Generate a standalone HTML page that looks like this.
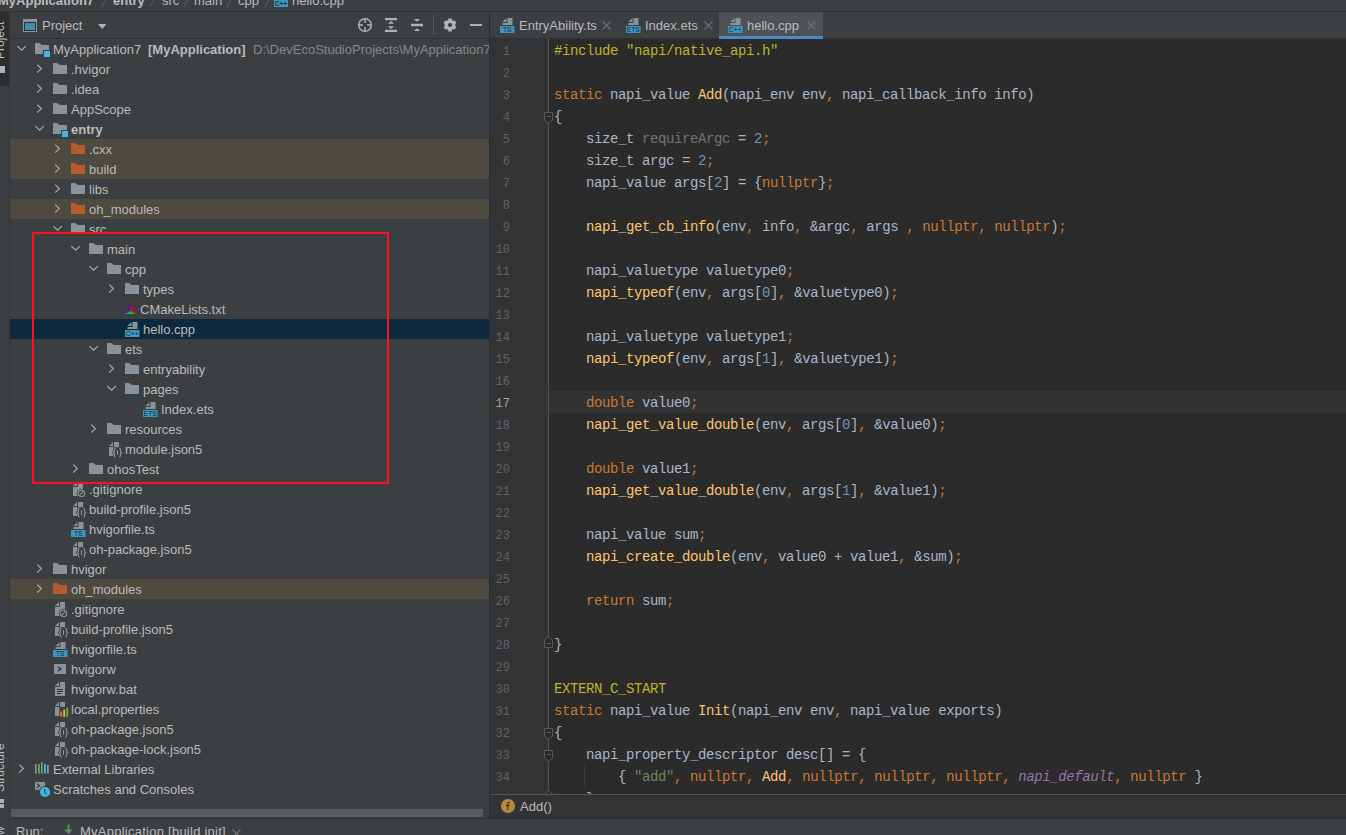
<!DOCTYPE html><html><head><meta charset="utf-8"><style>
*{margin:0;padding:0;box-sizing:border-box}
html,body{width:1346px;height:835px;overflow:hidden;background:#3C3F41;font-family:"Liberation Sans",sans-serif;font-size:13px;color:#BBBBBB}
.a{position:absolute}
.ic{position:absolute;display:block}
.hl{position:absolute;left:10px;width:479px;height:20px}
.tt{position:absolute;height:20px;line-height:20px;padding-top:1px;white-space:nowrap;color:#BBBBBB}
.tt b{font-weight:bold}
.loc{color:#878787}
#tree{position:absolute;left:0;top:0;width:489px;height:808px;overflow:hidden}
#editor{position:absolute;left:489px;top:39px;width:857px;height:755px;background:#2B2B2B;overflow:hidden}
.ln{position:absolute;left:489px;width:21px;height:22px;line-height:22px;padding-top:2px;text-align:right;font-family:"Liberation Mono",monospace;font-size:12px;color:#606366}
.ln.cur{color:#A4A3A3}
.cl{position:absolute;left:554px;height:22px;line-height:22px;padding-top:1px;white-space:pre;font-family:"Liberation Mono",monospace;font-size:14px;letter-spacing:-0.4px;color:#A9B7C6}
.k{color:#CC7832} .d{color:#A9B7C6} .f{color:#FFC66D} .n{color:#6897BB} .s{color:#6A8759} .p{color:#BBB529} .u{color:#72737A} .m{color:#BBB529} .i{color:#9876AA;font-style:italic}
.tab{position:absolute;top:13px;height:26px;line-height:26px;white-space:nowrap}
.bc{position:absolute;top:-7px;height:16px;line-height:16px;white-space:nowrap;color:#BBBBBB}
.sep{color:#6E6E6E}
</style></head><body>
<div class="a" style="left:0;top:0;width:1346px;height:11px;background:#3C3F41"></div>
<div class="bc" style="left:-2px;font-weight:bold">MyApplication7</div>
<svg class="ic" style="left:101px;top:0px" width="7" height="8" viewBox="0 0 7 8"><path d="M5.4 -1 L0.8 7" stroke="#5F6264" stroke-width="1"/></svg>
<div class="bc" style="left:113px;font-weight:bold">entry</div>
<svg class="ic" style="left:149px;top:0px" width="7" height="8" viewBox="0 0 7 8"><path d="M5.4 -1 L0.8 7" stroke="#5F6264" stroke-width="1"/></svg>
<div class="bc" style="left:162px">src</div>
<svg class="ic" style="left:183px;top:0px" width="7" height="8" viewBox="0 0 7 8"><path d="M5.4 -1 L0.8 7" stroke="#5F6264" stroke-width="1"/></svg>
<div class="bc" style="left:194px">main</div>
<svg class="ic" style="left:226px;top:0px" width="7" height="8" viewBox="0 0 7 8"><path d="M5.4 -1 L0.8 7" stroke="#5F6264" stroke-width="1"/></svg>
<div class="bc" style="left:238px">cpp</div>
<svg class="ic" style="left:264px;top:0px" width="7" height="8" viewBox="0 0 7 8"><path d="M5.4 -1 L0.8 7" stroke="#5F6264" stroke-width="1"/></svg>
<svg class="ic" style="left:274px;top:0px" width="14" height="8" viewBox="0 0 14 8"><rect x="0" y="0" width="14" height="7" fill="#3D96BF"/><text x="7" y="6" font-family="Liberation Sans" font-size="6.5" font-weight="bold" fill="#1F2B33" text-anchor="middle">C++</text></svg>
<div class="bc" style="left:292px">hello.cpp</div>
<div class="a" style="left:0;top:11px;width:1346px;height:1px;background:#2E3032"></div>
<div class="a" style="left:0;top:12px;width:9px;height:823px;background:#3C3F41"></div>
<div class="a" style="left:0;top:12px;width:9px;height:74px;background:#2B2D2E;overflow:hidden"><div style="position:absolute;left:-7px;top:47px;transform:rotate(-90deg);transform-origin:0 0;font-size:12px;color:#BBBBBB;white-space:nowrap;line-height:14px;height:14px;width:45px">Project</div></div>
<div class="a" style="left:0;top:66px;width:5px;height:7px;background:#AFB1B3"></div>
<div class="a" style="left:0;top:700px;width:9px;height:118px;overflow:hidden"><div style="position:absolute;left:-7px;top:92px;transform:rotate(-90deg);transform-origin:0 0;font-size:12px;color:#BBBBBB;white-space:nowrap;line-height:14px;height:14px;width:60px">Structure</div></div>
<div class="a" style="left:0;top:799px;width:4px;height:4px;background:#AFB1B3"></div>
<div class="a" style="left:0;top:804px;width:4px;height:4px;background:#AFB1B3"></div>
<div class="a" style="left:9px;top:12px;width:1px;height:823px;background:#323537"></div>
<div class="a" style="left:10px;top:12px;width:479px;height:26px;background:#3C3F41"></div>
<div class="a" style="left:10px;top:38px;width:479px;height:1px;background:#323232"></div>
<svg class="ic" style="left:23px;top:19px" width="14" height="13" viewBox="0 0 14 13"><rect x="0" y="0" width="14" height="13" fill="#88939A"/><rect x="1" y="3" width="12" height="9" fill="#2B2D2E"/><rect x="2" y="4" width="10" height="7" fill="#3D8FB0"/></svg>
<div class="tt" style="left:42px;top:16px;padding-top:0">Project</div>
<svg class="ic" style="left:98px;top:24px" width="9" height="6" viewBox="0 0 9 6"><path d="M0 0 H8.5 L4.25 5 Z" fill="#AFB1B3"/></svg>
<svg class="ic" style="left:357px;top:17px" width="16" height="16" viewBox="0 0 16 16"><circle cx="8" cy="8" r="6.3" fill="none" stroke="#AFB1B3" stroke-width="1.5"/><path d="M8 1.5 V6 M8 10 V14.5 M1.5 8 H6 M10 8 H14.5" stroke="#AFB1B3" stroke-width="1.5"/></svg>
<svg class="ic" style="left:384px;top:17px" width="14" height="16" viewBox="0 0 14 16"><rect x="1" y="1" width="12" height="2.2" fill="#AFB1B3"/><rect x="1" y="12.8" width="12" height="2.2" fill="#AFB1B3"/><path d="M7 4 L10.2 6.8 H3.8 Z M7 12 L10.2 9.2 H3.8 Z" fill="#AFB1B3"/></svg>
<svg class="ic" style="left:410px;top:17px" width="14" height="16" viewBox="0 0 14 16"><rect x="1" y="6.8" width="12" height="2.4" fill="#AFB1B3"/><path d="M3.8 2 H10.2 L7 4.8 Z M3.8 14 H10.2 L7 11.2 Z" fill="#AFB1B3"/></svg>
<div class="a" style="left:433px;top:15px;width:1px;height:20px;background:#55585A"></div>
<svg class="ic" style="left:443px;top:18px" width="14" height="14" viewBox="0 0 14 14"><path d="M4.73 2.54 L5.52 0.57 L8.48 0.57 L9.27 2.54 L9.72 2.81 L11.83 2.50 L13.31 5.07 L11.99 6.74 L11.99 7.26 L13.31 8.93 L11.83 11.50 L9.72 11.19 L9.27 11.46 L8.48 13.43 L5.52 13.43 L4.73 11.46 L4.28 11.19 L2.17 11.50 L0.69 8.93 L2.01 7.26 L2.01 6.74 L0.69 5.07 L2.17 2.50 L4.28 2.81 Z" fill="#AFB1B3"/><circle cx="7" cy="7" r="2.1" fill="#3C3F41"/></svg>
<div class="a" style="left:470px;top:24px;width:12px;height:2px;background:#AFB1B3"></div>
<div class="a" style="left:0;top:0;width:489px;height:808px;overflow:hidden">
<svg class="ic" style="left:16px;top:45px" width="12" height="7" viewBox="0 0 12 7"><path d="M1.3 1.1 L5.6 5.2 L9.9 1.1" fill="none" stroke="#A7A9AB" stroke-width="1.3"/></svg>
<svg class="ic" style="left:35px;top:43px" width="16" height="14" viewBox="0 0 16 14"><path d="M0 0 H4 L7 2 H14 V11 H0 Z" fill="#88939A"/><rect x="8" y="7" width="8" height="8" fill="#3C3F41"/><rect x="9" y="8" width="6" height="6" fill="#40B6E0"/></svg>
<div class="tt" style="top:39px;left:53px">MyApplication7<b style="position:absolute;left:95px">[MyApplication]</b><span class="loc" style="position:absolute;left:200px">D:\DevEcoStudioProjects\MyApplication7</span></div>
<svg class="ic" style="left:36px;top:64px" width="7" height="10" viewBox="0 0 7 10"><path d="M1.2 0.6 L5.3 4.6 L1.2 8.6" fill="none" stroke="#A7A9AB" stroke-width="1.3"/></svg>
<svg class="ic" style="left:53px;top:63px" width="16" height="14" viewBox="0 0 16 14"><path d="M0 0 H4 L7 2 H14 V11 H0 Z" fill="#88939A"/></svg>
<div class="tt" style="top:59px;left:71px">.hvigor</div>
<svg class="ic" style="left:36px;top:84px" width="7" height="10" viewBox="0 0 7 10"><path d="M1.2 0.6 L5.3 4.6 L1.2 8.6" fill="none" stroke="#A7A9AB" stroke-width="1.3"/></svg>
<svg class="ic" style="left:53px;top:83px" width="16" height="14" viewBox="0 0 16 14"><path d="M0 0 H4 L7 2 H14 V11 H0 Z" fill="#88939A"/></svg>
<div class="tt" style="top:79px;left:71px">.idea</div>
<svg class="ic" style="left:36px;top:104px" width="7" height="10" viewBox="0 0 7 10"><path d="M1.2 0.6 L5.3 4.6 L1.2 8.6" fill="none" stroke="#A7A9AB" stroke-width="1.3"/></svg>
<svg class="ic" style="left:53px;top:103px" width="16" height="14" viewBox="0 0 16 14"><path d="M0 0 H4 L7 2 H14 V11 H0 Z" fill="#88939A"/></svg>
<div class="tt" style="top:99px;left:71px">AppScope</div>
<svg class="ic" style="left:34px;top:125px" width="12" height="7" viewBox="0 0 12 7"><path d="M1.3 1.1 L5.6 5.2 L9.9 1.1" fill="none" stroke="#A7A9AB" stroke-width="1.3"/></svg>
<svg class="ic" style="left:53px;top:123px" width="16" height="14" viewBox="0 0 16 14"><path d="M0 0 H4 L7 2 H14 V11 H0 Z" fill="#88939A"/><rect x="8" y="7" width="8" height="8" fill="#3C3F41"/><rect x="9" y="8" width="6" height="6" fill="#40B6E0"/></svg>
<div class="tt" style="top:119px;left:71px"><b>entry</b></div>
<div class="hl" style="top:139px;background:#4F4A3F"></div>
<svg class="ic" style="left:54px;top:144px" width="7" height="10" viewBox="0 0 7 10"><path d="M1.2 0.6 L5.3 4.6 L1.2 8.6" fill="none" stroke="#A7A9AB" stroke-width="1.3"/></svg>
<svg class="ic" style="left:71px;top:143px" width="16" height="14" viewBox="0 0 16 14"><path d="M0 0 H4 L7 2 H14 V11 H0 Z" fill="#B45C2E"/></svg>
<div class="tt" style="top:139px;left:89px">.cxx</div>
<div class="hl" style="top:159px;background:#4F4A3F"></div>
<svg class="ic" style="left:54px;top:164px" width="7" height="10" viewBox="0 0 7 10"><path d="M1.2 0.6 L5.3 4.6 L1.2 8.6" fill="none" stroke="#A7A9AB" stroke-width="1.3"/></svg>
<svg class="ic" style="left:71px;top:163px" width="16" height="14" viewBox="0 0 16 14"><path d="M0 0 H4 L7 2 H14 V11 H0 Z" fill="#B45C2E"/></svg>
<div class="tt" style="top:159px;left:89px">build</div>
<svg class="ic" style="left:54px;top:184px" width="7" height="10" viewBox="0 0 7 10"><path d="M1.2 0.6 L5.3 4.6 L1.2 8.6" fill="none" stroke="#A7A9AB" stroke-width="1.3"/></svg>
<svg class="ic" style="left:71px;top:183px" width="16" height="14" viewBox="0 0 16 14"><path d="M0 0 H4 L7 2 H14 V11 H0 Z" fill="#88939A"/></svg>
<div class="tt" style="top:179px;left:89px">libs</div>
<div class="hl" style="top:199px;background:#4F4A3F"></div>
<svg class="ic" style="left:54px;top:204px" width="7" height="10" viewBox="0 0 7 10"><path d="M1.2 0.6 L5.3 4.6 L1.2 8.6" fill="none" stroke="#A7A9AB" stroke-width="1.3"/></svg>
<svg class="ic" style="left:71px;top:203px" width="16" height="14" viewBox="0 0 16 14"><path d="M0 0 H4 L7 2 H14 V11 H0 Z" fill="#B45C2E"/></svg>
<div class="tt" style="top:199px;left:89px">oh_modules</div>
<svg class="ic" style="left:52px;top:225px" width="12" height="7" viewBox="0 0 12 7"><path d="M1.3 1.1 L5.6 5.2 L9.9 1.1" fill="none" stroke="#A7A9AB" stroke-width="1.3"/></svg>
<svg class="ic" style="left:71px;top:223px" width="16" height="14" viewBox="0 0 16 14"><path d="M0 0 H4 L7 2 H14 V11 H0 Z" fill="#88939A"/></svg>
<div class="tt" style="top:219px;left:89px">src</div>
<svg class="ic" style="left:70px;top:245px" width="12" height="7" viewBox="0 0 12 7"><path d="M1.3 1.1 L5.6 5.2 L9.9 1.1" fill="none" stroke="#A7A9AB" stroke-width="1.3"/></svg>
<svg class="ic" style="left:89px;top:243px" width="16" height="14" viewBox="0 0 16 14"><path d="M0 0 H4 L7 2 H14 V11 H0 Z" fill="#88939A"/></svg>
<div class="tt" style="top:239px;left:107px">main</div>
<svg class="ic" style="left:88px;top:265px" width="12" height="7" viewBox="0 0 12 7"><path d="M1.3 1.1 L5.6 5.2 L9.9 1.1" fill="none" stroke="#A7A9AB" stroke-width="1.3"/></svg>
<svg class="ic" style="left:107px;top:263px" width="16" height="14" viewBox="0 0 16 14"><path d="M0 0 H4 L7 2 H14 V11 H0 Z" fill="#88939A"/></svg>
<div class="tt" style="top:259px;left:125px">cpp</div>
<svg class="ic" style="left:108px;top:284px" width="7" height="10" viewBox="0 0 7 10"><path d="M1.2 0.6 L5.3 4.6 L1.2 8.6" fill="none" stroke="#A7A9AB" stroke-width="1.3"/></svg>
<svg class="ic" style="left:125px;top:283px" width="16" height="14" viewBox="0 0 16 14"><path d="M0 0 H4 L7 2 H14 V11 H0 Z" fill="#88939A"/></svg>
<div class="tt" style="top:279px;left:143px">types</div>
<svg class="ic" style="left:125px;top:303px" width="12" height="12" viewBox="0 0 12 12"><path d="M5.5 0 L0 11 L5.5 8 Z" fill="#3A1FC0"/><path d="M5.5 0 L11 11 L5.5 8 Z" fill="#D8001E"/><path d="M0 11 L5.5 8 L11 11 Z" fill="#00C81E"/></svg>
<div class="tt" style="top:299px;left:140px">CMakeLists.txt</div>
<div class="hl" style="top:319px;background:#0D293E"></div>
<svg class="ic" style="left:125px;top:321px" width="16" height="16" viewBox="0 0 16 16"><path d="M2.5 5 L6.5 1 V5 Z" fill="#88939A"/><path d="M7.5 1 H12.5 V8 H2.5 V6 H7.5 Z" fill="#88939A"/><rect x="0" y="9" width="14.5" height="7" fill="#3D96BF"/><text x="7.25" y="15" font-family="Liberation Sans" font-size="6.8" fill="#1C2A35" text-anchor="middle">C++</text></svg>
<div class="tt" style="top:319px;left:143px">hello.cpp</div>
<svg class="ic" style="left:88px;top:345px" width="12" height="7" viewBox="0 0 12 7"><path d="M1.3 1.1 L5.6 5.2 L9.9 1.1" fill="none" stroke="#A7A9AB" stroke-width="1.3"/></svg>
<svg class="ic" style="left:107px;top:343px" width="16" height="14" viewBox="0 0 16 14"><path d="M0 0 H4 L7 2 H14 V11 H0 Z" fill="#88939A"/></svg>
<div class="tt" style="top:339px;left:125px">ets</div>
<svg class="ic" style="left:108px;top:364px" width="7" height="10" viewBox="0 0 7 10"><path d="M1.2 0.6 L5.3 4.6 L1.2 8.6" fill="none" stroke="#A7A9AB" stroke-width="1.3"/></svg>
<svg class="ic" style="left:125px;top:363px" width="16" height="14" viewBox="0 0 16 14"><path d="M0 0 H4 L7 2 H14 V11 H0 Z" fill="#88939A"/></svg>
<div class="tt" style="top:359px;left:143px">entryability</div>
<svg class="ic" style="left:106px;top:385px" width="12" height="7" viewBox="0 0 12 7"><path d="M1.3 1.1 L5.6 5.2 L9.9 1.1" fill="none" stroke="#A7A9AB" stroke-width="1.3"/></svg>
<svg class="ic" style="left:125px;top:383px" width="16" height="14" viewBox="0 0 16 14"><path d="M0 0 H4 L7 2 H14 V11 H0 Z" fill="#88939A"/></svg>
<div class="tt" style="top:379px;left:143px">pages</div>
<svg class="ic" style="left:143px;top:401px" width="16" height="16" viewBox="0 0 16 16"><path d="M2.5 5 L6.5 1 V5 Z" fill="#88939A"/><path d="M7.5 1 H12.5 V8 H2.5 V6 H7.5 Z" fill="#88939A"/><rect x="0" y="9" width="14.5" height="7" fill="#3D96BF"/><text x="7.25" y="15" font-family="Liberation Sans" font-size="6.8" fill="#1C2A35" text-anchor="middle">ETS</text></svg>
<div class="tt" style="top:399px;left:161px">Index.ets</div>
<svg class="ic" style="left:90px;top:424px" width="7" height="10" viewBox="0 0 7 10"><path d="M1.2 0.6 L5.3 4.6 L1.2 8.6" fill="none" stroke="#A7A9AB" stroke-width="1.3"/></svg>
<svg class="ic" style="left:107px;top:423px" width="16" height="14" viewBox="0 0 16 14"><path d="M0 0 H4 L7 2 H14 V11 H0 Z" fill="#88939A"/></svg>
<div class="tt" style="top:419px;left:125px">resources</div>
<svg class="ic" style="left:107px;top:441px" width="16" height="17" viewBox="0 0 16 17"><path d="M2 5 L6 1 V5 Z" fill="#88939A"/><path d="M7 1 H12 V15 H2 V6 H7 Z" fill="#88939A"/><path d="M6.2 6.2 H14.8 V9.8 L16 11.5 L14.8 13.2 V16.8 H6.2 V13.2 L4.5 11.5 L6.2 9.8 Z" fill="#3C3F41"/><path d="M8.8 7.2 Q7.4 7.2 7.4 8.6 V10.6 L6.2 11.5 L7.4 12.4 V14.6 Q7.4 16 8.8 16 M12.2 7.2 Q13.6 7.2 13.6 8.6 V10.6 L14.8 11.5 L13.6 12.4 V14.6 Q13.6 16 12.2 16" fill="none" stroke="#88939A" stroke-width="1.1"/><rect x="9.9" y="9.3" width="1.2" height="4.6" fill="#88939A"/></svg>
<div class="tt" style="top:439px;left:125px">module.json5</div>
<svg class="ic" style="left:72px;top:464px" width="7" height="10" viewBox="0 0 7 10"><path d="M1.2 0.6 L5.3 4.6 L1.2 8.6" fill="none" stroke="#A7A9AB" stroke-width="1.3"/></svg>
<svg class="ic" style="left:89px;top:463px" width="16" height="14" viewBox="0 0 16 14"><path d="M0 0 H4 L7 2 H14 V11 H0 Z" fill="#88939A"/></svg>
<div class="tt" style="top:459px;left:107px">ohosTest</div>
<svg class="ic" style="left:71px;top:481px" width="16" height="17" viewBox="0 0 16 17"><path d="M2 5 L6 1 V5 Z" fill="#88939A"/><path d="M7 1 H12 V15 H2 V6 H7 Z" fill="#88939A"/><circle cx="10.4" cy="12.4" r="4.6" fill="#3C3F41"/><circle cx="10.4" cy="12.4" r="3.2" fill="none" stroke="#88939A" stroke-width="1.2"/><path d="M8.2 14.6 L12.6 10.2" stroke="#88939A" stroke-width="1.2"/></svg>
<div class="tt" style="top:479px;left:89px">.gitignore</div>
<svg class="ic" style="left:71px;top:501px" width="16" height="17" viewBox="0 0 16 17"><path d="M2 5 L6 1 V5 Z" fill="#88939A"/><path d="M7 1 H12 V15 H2 V6 H7 Z" fill="#88939A"/><path d="M6.2 6.2 H14.8 V9.8 L16 11.5 L14.8 13.2 V16.8 H6.2 V13.2 L4.5 11.5 L6.2 9.8 Z" fill="#3C3F41"/><path d="M8.8 7.2 Q7.4 7.2 7.4 8.6 V10.6 L6.2 11.5 L7.4 12.4 V14.6 Q7.4 16 8.8 16 M12.2 7.2 Q13.6 7.2 13.6 8.6 V10.6 L14.8 11.5 L13.6 12.4 V14.6 Q13.6 16 12.2 16" fill="none" stroke="#88939A" stroke-width="1.1"/><rect x="9.9" y="9.3" width="1.2" height="4.6" fill="#88939A"/></svg>
<div class="tt" style="top:499px;left:89px">build-profile.json5</div>
<svg class="ic" style="left:71px;top:521px" width="16" height="16" viewBox="0 0 16 16"><path d="M2.5 5 L6.5 1 V5 Z" fill="#88939A"/><path d="M7.5 1 H12.5 V8 H2.5 V6 H7.5 Z" fill="#88939A"/><rect x="0" y="9" width="14.5" height="7" fill="#3D96BF"/><text x="7.25" y="15" font-family="Liberation Sans" font-size="6.8" fill="#1C2A35" text-anchor="middle">TS</text></svg>
<div class="tt" style="top:519px;left:89px">hvigorfile.ts</div>
<svg class="ic" style="left:71px;top:541px" width="16" height="17" viewBox="0 0 16 17"><path d="M2 5 L6 1 V5 Z" fill="#88939A"/><path d="M7 1 H12 V15 H2 V6 H7 Z" fill="#88939A"/><path d="M6.2 6.2 H14.8 V9.8 L16 11.5 L14.8 13.2 V16.8 H6.2 V13.2 L4.5 11.5 L6.2 9.8 Z" fill="#3C3F41"/><path d="M8.8 7.2 Q7.4 7.2 7.4 8.6 V10.6 L6.2 11.5 L7.4 12.4 V14.6 Q7.4 16 8.8 16 M12.2 7.2 Q13.6 7.2 13.6 8.6 V10.6 L14.8 11.5 L13.6 12.4 V14.6 Q13.6 16 12.2 16" fill="none" stroke="#88939A" stroke-width="1.1"/><rect x="9.9" y="9.3" width="1.2" height="4.6" fill="#88939A"/></svg>
<div class="tt" style="top:539px;left:89px">oh-package.json5</div>
<svg class="ic" style="left:36px;top:564px" width="7" height="10" viewBox="0 0 7 10"><path d="M1.2 0.6 L5.3 4.6 L1.2 8.6" fill="none" stroke="#A7A9AB" stroke-width="1.3"/></svg>
<svg class="ic" style="left:53px;top:563px" width="16" height="14" viewBox="0 0 16 14"><path d="M0 0 H4 L7 2 H14 V11 H0 Z" fill="#88939A"/></svg>
<div class="tt" style="top:559px;left:71px">hvigor</div>
<div class="hl" style="top:579px;background:#4F4A3F"></div>
<svg class="ic" style="left:36px;top:584px" width="7" height="10" viewBox="0 0 7 10"><path d="M1.2 0.6 L5.3 4.6 L1.2 8.6" fill="none" stroke="#A7A9AB" stroke-width="1.3"/></svg>
<svg class="ic" style="left:53px;top:583px" width="16" height="14" viewBox="0 0 16 14"><path d="M0 0 H4 L7 2 H14 V11 H0 Z" fill="#B45C2E"/></svg>
<div class="tt" style="top:579px;left:71px">oh_modules</div>
<svg class="ic" style="left:53px;top:601px" width="16" height="17" viewBox="0 0 16 17"><path d="M2 5 L6 1 V5 Z" fill="#88939A"/><path d="M7 1 H12 V15 H2 V6 H7 Z" fill="#88939A"/><circle cx="10.4" cy="12.4" r="4.6" fill="#3C3F41"/><circle cx="10.4" cy="12.4" r="3.2" fill="none" stroke="#88939A" stroke-width="1.2"/><path d="M8.2 14.6 L12.6 10.2" stroke="#88939A" stroke-width="1.2"/></svg>
<div class="tt" style="top:599px;left:71px">.gitignore</div>
<svg class="ic" style="left:53px;top:621px" width="16" height="17" viewBox="0 0 16 17"><path d="M2 5 L6 1 V5 Z" fill="#88939A"/><path d="M7 1 H12 V15 H2 V6 H7 Z" fill="#88939A"/><path d="M6.2 6.2 H14.8 V9.8 L16 11.5 L14.8 13.2 V16.8 H6.2 V13.2 L4.5 11.5 L6.2 9.8 Z" fill="#3C3F41"/><path d="M8.8 7.2 Q7.4 7.2 7.4 8.6 V10.6 L6.2 11.5 L7.4 12.4 V14.6 Q7.4 16 8.8 16 M12.2 7.2 Q13.6 7.2 13.6 8.6 V10.6 L14.8 11.5 L13.6 12.4 V14.6 Q13.6 16 12.2 16" fill="none" stroke="#88939A" stroke-width="1.1"/><rect x="9.9" y="9.3" width="1.2" height="4.6" fill="#88939A"/></svg>
<div class="tt" style="top:619px;left:71px">build-profile.json5</div>
<svg class="ic" style="left:53px;top:641px" width="16" height="16" viewBox="0 0 16 16"><path d="M2.5 5 L6.5 1 V5 Z" fill="#88939A"/><path d="M7.5 1 H12.5 V8 H2.5 V6 H7.5 Z" fill="#88939A"/><rect x="0" y="9" width="14.5" height="7" fill="#3D96BF"/><text x="7.25" y="15" font-family="Liberation Sans" font-size="6.8" fill="#1C2A35" text-anchor="middle">TS</text></svg>
<div class="tt" style="top:639px;left:71px">hvigorfile.ts</div>
<svg class="ic" style="left:53px;top:661px" width="16" height="16" viewBox="0 0 16 16"><rect x="1" y="3" width="12" height="10" fill="#88939A"/><path d="M5 6 L8 8 L5 10" fill="none" stroke="#2E3133" stroke-width="1.4"/></svg>
<div class="tt" style="top:659px;left:71px">hvigorw</div>
<svg class="ic" style="left:53px;top:681px" width="16" height="16" viewBox="0 0 16 16"><path d="M2 5 L6 1 V5 Z" fill="#88939A"/><path d="M7 1 H12 V15 H2 V6 H7 Z" fill="#88939A"/><rect x="4" y="8" width="6" height="1" fill="#2E3133"/><rect x="4" y="10" width="6" height="1" fill="#2E3133"/><rect x="4" y="12" width="4" height="1" fill="#2E3133"/></svg>
<div class="tt" style="top:679px;left:71px">hvigorw.bat</div>
<svg class="ic" style="left:53px;top:701px" width="17" height="16" viewBox="0 0 17 16"><path d="M2 5 L6 1 V5 Z" fill="#88939A"/><path d="M7 1 H12 V15 H2 V6 H7 Z" fill="#88939A"/><rect x="6.3" y="5.8" width="10.5" height="10.2" fill="#3C3F41"/><rect x="7.3" y="10.4" width="1.9" height="5.4" fill="#EE6A2A"/><rect x="10.3" y="8.6" width="1.9" height="7.2" fill="#F4B437"/><rect x="13.3" y="6.8" width="1.9" height="9" fill="#5DB043"/></svg>
<div class="tt" style="top:699px;left:71px">local.properties</div>
<svg class="ic" style="left:53px;top:721px" width="16" height="17" viewBox="0 0 16 17"><path d="M2 5 L6 1 V5 Z" fill="#88939A"/><path d="M7 1 H12 V15 H2 V6 H7 Z" fill="#88939A"/><path d="M6.2 6.2 H14.8 V9.8 L16 11.5 L14.8 13.2 V16.8 H6.2 V13.2 L4.5 11.5 L6.2 9.8 Z" fill="#3C3F41"/><path d="M8.8 7.2 Q7.4 7.2 7.4 8.6 V10.6 L6.2 11.5 L7.4 12.4 V14.6 Q7.4 16 8.8 16 M12.2 7.2 Q13.6 7.2 13.6 8.6 V10.6 L14.8 11.5 L13.6 12.4 V14.6 Q13.6 16 12.2 16" fill="none" stroke="#88939A" stroke-width="1.1"/><rect x="9.9" y="9.3" width="1.2" height="4.6" fill="#88939A"/></svg>
<div class="tt" style="top:719px;left:71px">oh-package.json5</div>
<svg class="ic" style="left:53px;top:741px" width="16" height="17" viewBox="0 0 16 17"><path d="M2 5 L6 1 V5 Z" fill="#88939A"/><path d="M7 1 H12 V15 H2 V6 H7 Z" fill="#88939A"/><path d="M6.2 6.2 H14.8 V9.8 L16 11.5 L14.8 13.2 V16.8 H6.2 V13.2 L4.5 11.5 L6.2 9.8 Z" fill="#3C3F41"/><path d="M8.8 7.2 Q7.4 7.2 7.4 8.6 V10.6 L6.2 11.5 L7.4 12.4 V14.6 Q7.4 16 8.8 16 M12.2 7.2 Q13.6 7.2 13.6 8.6 V10.6 L14.8 11.5 L13.6 12.4 V14.6 Q13.6 16 12.2 16" fill="none" stroke="#88939A" stroke-width="1.1"/><rect x="9.9" y="9.3" width="1.2" height="4.6" fill="#88939A"/></svg>
<div class="tt" style="top:739px;left:71px">oh-package-lock.json5</div>
<svg class="ic" style="left:18px;top:764px" width="7" height="10" viewBox="0 0 7 10"><path d="M1.2 0.6 L5.3 4.6 L1.2 8.6" fill="none" stroke="#A7A9AB" stroke-width="1.3"/></svg>
<svg class="ic" style="left:35px;top:762px" width="16" height="14" viewBox="0 0 16 14"><rect x="0" y="2" width="1.6" height="9.6" fill="#88939A"/><rect x="3" y="2" width="1.8" height="9.6" fill="#5DB043"/><rect x="6" y="0" width="1.6" height="11.6" fill="#88939A"/><rect x="9" y="2" width="1.8" height="9.6" fill="#40B6E0"/><rect x="12" y="3" width="1.8" height="8.6" fill="#88939A"/></svg>
<div class="tt" style="top:759px;left:53px">External Libraries</div>
<svg class="ic" style="left:35px;top:781px" width="17" height="17" viewBox="0 0 17 17"><rect x="0" y="1" width="10" height="7.8" fill="#88939A"/><path d="M1.8 2.6 L4.6 4.6 L1.8 6.6" fill="none" stroke="#2E3133" stroke-width="1.1"/><circle cx="10" cy="11" r="6" fill="#3C3F41"/><circle cx="10" cy="11" r="5.1" fill="#40B6E0"/><path d="M9.6 8 V11.4 L11.8 13" fill="none" stroke="#2E3133" stroke-width="1"/></svg>
<div class="tt" style="top:779px;left:53px">Scratches and Consoles</div>
</div>
<div class="a" style="left:32px;top:232px;width:357px;height:252px;border:2px solid #FF1020"></div>
<div class="a" style="left:489px;top:12px;width:1px;height:806px;background:#2B2D2E"></div>
<div class="a" style="left:490px;top:12px;width:856px;height:26px;background:#3C3F41"></div>
<div class="a" style="left:490px;top:38px;width:856px;height:1px;background:#323232"></div>
<div class="a" style="left:719px;top:12px;width:104px;height:24px;background:#4E5254"></div>
<div class="a" style="left:719px;top:36px;width:104px;height:3px;background:#4A88C7"></div>
<svg class="ic" style="left:500px;top:17px" width="16" height="16" viewBox="0 0 16 16"><path d="M2.5 5 L6.5 1 V5 Z" fill="#88939A"/><path d="M7.5 1 H12.5 V8 H2.5 V6 H7.5 Z" fill="#88939A"/><rect x="0" y="9" width="14.5" height="7" fill="#3D96BF"/><text x="7.25" y="15" font-family="Liberation Sans" font-size="6.8" fill="#1C2A35" text-anchor="middle">TS</text></svg>
<div class="tab" style="left:519px">EntryAbility.ts</div>
<svg class="ic" style="left:602px;top:21px" width="9" height="9" viewBox="0 0 9 9"><path d="M0.5 0.5 L8.5 8.5 M8.5 0.5 L0.5 8.5" stroke="#6F7173" stroke-width="1.1"/></svg>
<svg class="ic" style="left:626px;top:17px" width="16" height="16" viewBox="0 0 16 16"><path d="M2.5 5 L6.5 1 V5 Z" fill="#88939A"/><path d="M7.5 1 H12.5 V8 H2.5 V6 H7.5 Z" fill="#88939A"/><rect x="0" y="9" width="14.5" height="7" fill="#3D96BF"/><text x="7.25" y="15" font-family="Liberation Sans" font-size="6.8" fill="#1C2A35" text-anchor="middle">ETS</text></svg>
<div class="tab" style="left:645px">Index.ets</div>
<svg class="ic" style="left:704px;top:21px" width="9" height="9" viewBox="0 0 9 9"><path d="M0.5 0.5 L8.5 8.5 M8.5 0.5 L0.5 8.5" stroke="#6F7173" stroke-width="1.1"/></svg>
<svg class="ic" style="left:728px;top:17px" width="16" height="16" viewBox="0 0 16 16"><path d="M2.5 5 L6.5 1 V5 Z" fill="#88939A"/><path d="M7.5 1 H12.5 V8 H2.5 V6 H7.5 Z" fill="#88939A"/><rect x="0" y="9" width="14.5" height="7" fill="#3D96BF"/><text x="7.25" y="15" font-family="Liberation Sans" font-size="6.8" fill="#1C2A35" text-anchor="middle">C++</text></svg>
<div class="tab" style="left:747px">hello.cpp</div>
<svg class="ic" style="left:807px;top:21px" width="9" height="9" viewBox="0 0 9 9"><path d="M0.5 0.5 L8.5 8.5 M8.5 0.5 L0.5 8.5" stroke="#6F7173" stroke-width="1.1"/></svg>
<div class="a" style="left:490px;top:39px;width:856px;height:755px;background:#2B2B2B"></div>
<div class="a" style="left:490px;top:39px;width:58px;height:755px;background:#313335"></div>
<div class="a" style="left:548px;top:39px;width:1px;height:755px;background:#555555"></div>
<div class="a" style="left:549px;top:391px;width:797px;height:22px;background:#323232"></div>
<div class="a" style="left:490px;top:391px;width:58px;height:22px;background:#333334"></div>
<div class="a" style="left:0;top:0;width:1346px;height:794px;overflow:hidden">
<div class="ln" style="top:39px">1</div>
<div class="cl" style="top:39px"><span class="p">#include &quot;napi/native_api.h&quot;</span></div>
<div class="ln" style="top:61px">2</div>
<div class="cl" style="top:61px"></div>
<div class="ln" style="top:83px">3</div>
<div class="cl" style="top:83px"><span class="k">static</span><span class="d"> napi_value </span><span class="f">Add</span><span class="d">(napi_env env</span><span class="k">,</span><span class="d"> napi_callback_info info)</span></div>
<div class="ln" style="top:105px">4</div>
<div class="cl" style="top:105px"><span class="d">{</span></div>
<div class="ln" style="top:127px">5</div>
<div class="cl" style="top:127px"><span class="d">    size_t </span><span class="u">requireArgc</span><span class="d"> = </span><span class="n">2</span><span class="k">;</span></div>
<div class="ln" style="top:149px">6</div>
<div class="cl" style="top:149px"><span class="d">    size_t argc = </span><span class="n">2</span><span class="k">;</span></div>
<div class="ln" style="top:171px">7</div>
<div class="cl" style="top:171px"><span class="d">    napi_value args[</span><span class="n">2</span><span class="d">] = {</span><span class="k">nullptr</span><span class="d">}</span><span class="k">;</span></div>
<div class="ln" style="top:193px">8</div>
<div class="cl" style="top:193px"></div>
<div class="ln" style="top:215px">9</div>
<div class="cl" style="top:215px"><span class="d">    </span><span class="f">napi_get_cb_info</span><span class="d">(env</span><span class="k">,</span><span class="d"> info</span><span class="k">,</span><span class="d"> &amp;argc</span><span class="k">,</span><span class="d"> args </span><span class="k">,</span><span class="d"> </span><span class="k">nullptr</span><span class="k">,</span><span class="d"> </span><span class="k">nullptr</span><span class="d">)</span><span class="k">;</span></div>
<div class="ln" style="top:237px">10</div>
<div class="cl" style="top:237px"></div>
<div class="ln" style="top:259px">11</div>
<div class="cl" style="top:259px"><span class="d">    napi_valuetype valuetype0</span><span class="k">;</span></div>
<div class="ln" style="top:281px">12</div>
<div class="cl" style="top:281px"><span class="d">    </span><span class="f">napi_typeof</span><span class="d">(env</span><span class="k">,</span><span class="d"> args[</span><span class="n">0</span><span class="d">]</span><span class="k">,</span><span class="d"> &amp;valuetype0)</span><span class="k">;</span></div>
<div class="ln" style="top:303px">13</div>
<div class="cl" style="top:303px"></div>
<div class="ln" style="top:325px">14</div>
<div class="cl" style="top:325px"><span class="d">    napi_valuetype valuetype1</span><span class="k">;</span></div>
<div class="ln" style="top:347px">15</div>
<div class="cl" style="top:347px"><span class="d">    </span><span class="f">napi_typeof</span><span class="d">(env</span><span class="k">,</span><span class="d"> args[</span><span class="n">1</span><span class="d">]</span><span class="k">,</span><span class="d"> &amp;valuetype1)</span><span class="k">;</span></div>
<div class="ln" style="top:369px">16</div>
<div class="cl" style="top:369px"></div>
<div class="ln cur" style="top:391px">17</div>
<div class="cl" style="top:391px"><span class="d">    </span><span class="k">double</span><span class="d"> value0</span><span class="k">;</span></div>
<div class="ln" style="top:413px">18</div>
<div class="cl" style="top:413px"><span class="d">    </span><span class="f">napi_get_value_double</span><span class="d">(env</span><span class="k">,</span><span class="d"> args[</span><span class="n">0</span><span class="d">]</span><span class="k">,</span><span class="d"> &amp;value0)</span><span class="k">;</span></div>
<div class="ln" style="top:435px">19</div>
<div class="cl" style="top:435px"></div>
<div class="ln" style="top:457px">20</div>
<div class="cl" style="top:457px"><span class="d">    </span><span class="k">double</span><span class="d"> value1</span><span class="k">;</span></div>
<div class="ln" style="top:479px">21</div>
<div class="cl" style="top:479px"><span class="d">    </span><span class="f">napi_get_value_double</span><span class="d">(env</span><span class="k">,</span><span class="d"> args[</span><span class="n">1</span><span class="d">]</span><span class="k">,</span><span class="d"> &amp;value1)</span><span class="k">;</span></div>
<div class="ln" style="top:501px">22</div>
<div class="cl" style="top:501px"></div>
<div class="ln" style="top:523px">23</div>
<div class="cl" style="top:523px"><span class="d">    napi_value sum</span><span class="k">;</span></div>
<div class="ln" style="top:545px">24</div>
<div class="cl" style="top:545px"><span class="d">    </span><span class="f">napi_create_double</span><span class="d">(env</span><span class="k">,</span><span class="d"> value0 + value1</span><span class="k">,</span><span class="d"> &amp;sum)</span><span class="k">;</span></div>
<div class="ln" style="top:567px">25</div>
<div class="cl" style="top:567px"></div>
<div class="ln" style="top:589px">26</div>
<div class="cl" style="top:589px"><span class="d">    </span><span class="k">return</span><span class="d"> sum</span><span class="k">;</span></div>
<div class="ln" style="top:611px">27</div>
<div class="cl" style="top:611px"></div>
<div class="ln" style="top:633px">28</div>
<div class="cl" style="top:633px"><span class="d">}</span></div>
<div class="ln" style="top:655px">29</div>
<div class="cl" style="top:655px"></div>
<div class="ln" style="top:677px">30</div>
<div class="cl" style="top:677px"><span class="m">EXTERN_C_START</span></div>
<div class="ln" style="top:699px">31</div>
<div class="cl" style="top:699px"><span class="k">static</span><span class="d"> napi_value </span><span class="f">Init</span><span class="d">(napi_env env</span><span class="k">,</span><span class="d"> napi_value exports)</span></div>
<div class="ln" style="top:721px">32</div>
<div class="cl" style="top:721px"><span class="d">{</span></div>
<div class="ln" style="top:743px">33</div>
<div class="cl" style="top:743px"><span class="d">    napi_property_descriptor desc[] = {</span></div>
<div class="ln" style="top:765px">34</div>
<div class="cl" style="top:765px"><span class="d">        { </span><span class="s">&quot;add&quot;</span><span class="k">,</span><span class="d"> </span><span class="k">nullptr</span><span class="k">,</span><span class="d"> </span><span class="f">Add</span><span class="k">,</span><span class="d"> </span><span class="k">nullptr</span><span class="k">,</span><span class="d"> </span><span class="k">nullptr</span><span class="k">,</span><span class="d"> </span><span class="k">nullptr</span><span class="k">,</span><span class="d"> </span><span class="i">napi_default</span><span class="k">,</span><span class="d"> </span><span class="k">nullptr</span><span class="d"> }</span></div>
<div class="ln" style="top:787px">35</div>
<div class="cl" style="top:787px"><span class="d">    };</span></div>
<svg class="ic" style="left:543px;top:112px" width="11" height="12" viewBox="0 0 11 12"><path d="M1.5 0.5 H9.5 V8 L5.5 11.5 L1.5 8 Z" fill="#2B2B2B" stroke="#5A5A5A" stroke-width="1"/><path d="M3.5 4.5 H7.5" stroke="#5A5A5A" stroke-width="1"/></svg>
<svg class="ic" style="left:543px;top:636px" width="11" height="12" viewBox="0 0 11 12"><path d="M1.5 11.5 H9.5 V4 L5.5 0.5 L1.5 4 Z" fill="#2B2B2B" stroke="#5A5A5A" stroke-width="1"/><path d="M3.5 7.5 H7.5" stroke="#5A5A5A" stroke-width="1"/></svg>
<svg class="ic" style="left:543px;top:728px" width="11" height="12" viewBox="0 0 11 12"><path d="M1.5 0.5 H9.5 V8 L5.5 11.5 L1.5 8 Z" fill="#2B2B2B" stroke="#5A5A5A" stroke-width="1"/><path d="M3.5 4.5 H7.5" stroke="#5A5A5A" stroke-width="1"/></svg>
<svg class="ic" style="left:543px;top:750px" width="11" height="12" viewBox="0 0 11 12"><path d="M1.5 0.5 H9.5 V8 L5.5 11.5 L1.5 8 Z" fill="#2B2B2B" stroke="#5A5A5A" stroke-width="1"/><path d="M3.5 4.5 H7.5" stroke="#5A5A5A" stroke-width="1"/></svg>
<svg class="ic" style="left:543px;top:790px" width="11" height="12" viewBox="0 0 11 12"><path d="M1.5 11.5 H9.5 V4 L5.5 0.5 L1.5 4 Z" fill="#2B2B2B" stroke="#5A5A5A" stroke-width="1"/><path d="M3.5 7.5 H7.5" stroke="#5A5A5A" stroke-width="1"/></svg>
<div class="a" style="left:584px;top:765px;width:1px;height:22px;background:#393939"></div>
</div>
<div class="a" style="left:490px;top:794px;width:856px;height:1px;background:#555555"></div>
<div class="a" style="left:490px;top:795px;width:856px;height:23px;background:#313335"></div>
<svg class="ic" style="left:500px;top:798px" width="16" height="16" viewBox="0 0 16 16"><circle cx="8" cy="8" r="7.1" fill="#B38A3E"/><path d="M9.9 4.4 Q8 3.9 7.7 5.6 V11.8 M6 7.4 H9.6" fill="none" stroke="#3B3222" stroke-width="1.1"/></svg>
<div class="tt" style="left:520px;top:796px;line-height:20px">Add()</div>
<div class="a" style="left:11px;top:809px;width:472px;height:8px;background:#595B5D"></div>
<div class="a" style="left:10px;top:818px;width:1336px;height:1px;background:#2E3032"></div>
<div class="a" style="left:10px;top:819px;width:1336px;height:16px;background:#3C3F41"></div>
<div class="a" style="left:0;top:818px;width:9px;height:17px;overflow:hidden"><div style="position:absolute;left:-7px;top:17px;transform:rotate(-90deg);transform-origin:0 0;font-size:12px;color:#BBBBBB;white-space:nowrap;line-height:14px;height:14px">w</div></div>
<div class="tt" style="left:16px;top:821px">Run:</div>
<div class="tt" style="left:80px;top:821px;letter-spacing:0.25px">MyApplication [build init]</div>
<svg class="ic" style="left:64px;top:824px" width="9" height="11" viewBox="0 0 9 11"><path d="M4.5 0.5 V6" stroke="#4E9A57" stroke-width="1.8"/><path d="M0.5 5.5 H8.5 L4.5 10 Z" fill="#4E9A57"/></svg>
<svg class="ic" style="left:232px;top:829px" width="9" height="9" viewBox="0 0 9 9"><path d="M0.5 0.5 L8.5 8.5 M8.5 0.5 L0.5 8.5" stroke="#6F7173" stroke-width="1.1"/></svg>
</body></html>
